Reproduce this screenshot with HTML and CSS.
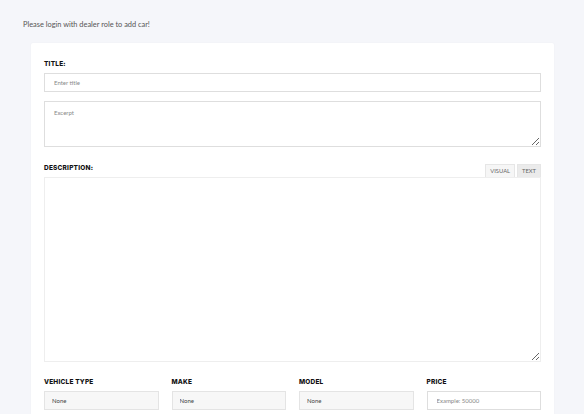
FILE: index.html
```html
<!DOCTYPE html>
<html>
<head>
<meta charset="utf-8">
<link rel="stylesheet" href="styles.css">
</head>
<body>
<div class="page">
  <p class="notice">Please login with dealer role to add car!</p>
  <div class="card">
    <label class="label">TITLE:</label>
    <input class="field" type="text" placeholder="Enter title">
    <textarea class="field excerpt" placeholder="Excerpt"></textarea>
    <div class="desc-head">
      <label class="label">DESCRIPTION:</label>
      <div class="tabs">
        <span class="tab visual">VISUAL</span>
        <span class="tab text">TEXT</span>
      </div>
    </div>
    <textarea class="field description"></textarea>
    <div class="grid">
      <div class="col">
        <label class="label">VEHICLE TYPE</label>
        <select class="field select"><option>None</option></select>
      </div>
      <div class="col">
        <label class="label">MAKE</label>
        <select class="field select"><option>None</option></select>
      </div>
      <div class="col">
        <label class="label">MODEL</label>
        <select class="field select"><option>None</option></select>
      </div>
      <div class="col">
        <label class="label">PRICE</label>
        <input class="field" type="text" placeholder="Example: 50000">
      </div>
    </div>
  </div>
</div>
</body>
</html>
```
FILE: styles.css
```css
* { box-sizing: border-box; }
html, body {
  margin: 0;
  padding: 0;
  background: #f5f6fa;
  font-family: "Lato", "Liberation Sans", sans-serif;
  overflow: hidden;
}
.page {
  padding: 18px 30px 0 23px;
}
.notice {
  margin: 0 0 11px 0;
  font-size: 7.4px;
  line-height: 14px;
  color: #555;
}
.card {
  margin-left: 8px;
  width: 523px;
  background: #fff;
  padding: 16px 13px 20px 13px;
  border-radius: 2px;
  box-shadow: 0 0 2px rgba(0,0,0,0.04);
}
.label {
  display: block;
  font-family: "Inter", "Liberation Sans", sans-serif;
  font-weight: 800;
  font-size: 6.5px;
  line-height: 10px;
  letter-spacing: 0.2px;
  color: #111;
  margin-bottom: 4px;
}
.field {
  display: block;
  width: 100%;
  height: 19px;
  border: 1px solid #dedede;
  background: #fff;
  font-family: "Lato", "Liberation Sans", sans-serif;
  font-size: 6px;
  color: #555;
  padding: 0 9px;
  outline: none;
  margin: 0;
  border-radius: 0;
}
.field::placeholder { color: #888; }
.excerpt {
  margin-top: 9px;
  height: 46px;
  padding-top: 7px;
  resize: vertical;
}
.desc-head {
  display: flex;
  justify-content: space-between;
  align-items: flex-start;
  margin-top: 16px;
  height: 14px;
}
.desc-head .label { margin: 0; }
.tabs {
  display: flex;
  gap: 2px;
  margin-top: 1px;
}
.tab {
  display: block;
  height: 13px;
  line-height: 12px;
  font-size: 5.8px;
  color: #666;
  padding: 0 4px;
  border: 1px solid #e6e6e6;
  border-bottom: none;
  background: #f6f6f6;
}
.tab.text { background: #ebebeb; }
.description {
  height: 185px;
  border-color: #eeeeee;
  resize: vertical;
}
.grid {
  display: grid;
  grid-template-columns: repeat(4, 1fr);
  column-gap: 13px;
  margin-top: 15px;
}
.select {
  appearance: none;
  -webkit-appearance: none;
  background: #f7f7f7;
  border-color: #e4e4e4;
  padding: 0 7px;
  color: #444;
}
```
